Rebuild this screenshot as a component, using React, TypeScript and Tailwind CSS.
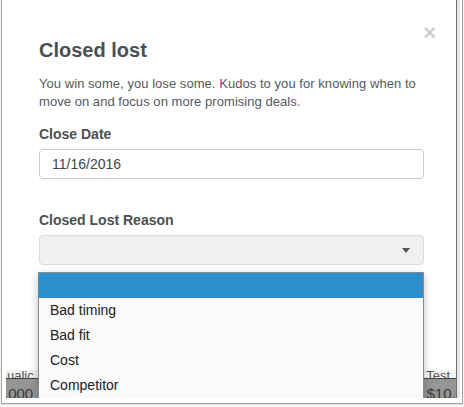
const reasons = ["Bad timing", "Bad fit", "Cost", "Competitor", "Other"];

export default function App() {
  return (
    <div
      className="w-[464px] h-[407px] bg-white pl-[1px] overflow-hidden"
      style={{ fontFamily: '"Liberation Sans", Arial, sans-serif' }}
    >
      <div className="w-[462px] h-[404px] border-l border-r border-b border-[#a3a3a3] pl-[4px] pr-[2px] pb-[5px] flex shadow-[0_1px_2px_rgba(0,0,0,0.15)]">
        {/* screenshot area */}
        <div className="relative flex-1 flex overflow-hidden">
          <div className="flex-1 flex flex-col">
            {/* modal */}
            <div className="relative h-[370px] bg-white pl-[33px] pr-[32px] pt-[38px]">
              <button className="absolute right-[20px] top-[22px] text-[22px] font-bold leading-none text-[#cfcfcf]">
                ×
              </button>
              <h2 className="text-[20px] font-semibold leading-[24px] text-[#4a4f54]">
                Closed lost
              </h2>
              <p className="mt-[13px] text-[13px] tracking-[0.05px] leading-[18px] text-[#55595e]">
                You win some, you lose some. Kudos to you for knowing when to move on and focus on more promising deals.
              </p>
              <p className="mt-[14px] text-[14px] font-bold leading-[18px] text-[#4a4f54]">Close Date</p>
              <div className="mt-[6px] h-[30px] rounded-[4px] border border-[#c9c9c9] bg-white pl-[12px] flex items-center text-[14px] text-[#444]">
                11/16/2016
              </div>
              <p className="mt-[32px] text-[14px] font-bold leading-[18px] text-[#4a4f54]">Closed Lost Reason</p>
              <div className="mt-[6px] h-[30px] rounded-[4px] border border-[#dcdcdc] bg-[#f0f0f0] flex items-center justify-end pr-[13px]">
                <span className="w-0 h-0 border-l-[4px] border-r-[4px] border-t-[5px] border-l-transparent border-r-transparent border-t-[#555]" />
              </div>
            </div>
            {/* page behind modal */}
            <div className="flex-1 flex flex-col bg-[#f3f3f3]">
              <div className="h-[9px] flex justify-between items-end border-b border-[#444] text-[13px] leading-[14px] text-[#555] overflow-hidden">
                <span className="-mb-[5px] pl-[1px]">ualic</span>
                <span className="-mb-[5px] pr-[6px]">Test</span>
              </div>
              <div className="flex-1 bg-[#959595] flex justify-between items-end text-[15px] text-[#3a3a3a] leading-none overflow-hidden">
                <span className="-ml-[2px] mb-[-3px]">.000</span>
                <span className="mb-[-3px] -mr-[8px]">$10.0</span>
              </div>
            </div>
          </div>
          <div className="w-[4px] border-l border-[#6e6e6e] bg-[#e6e6e6]" />

          {/* open dropdown */}
          <div className="absolute left-[32px] top-[272px] w-[386px] h-[140px] border border-[#8a8a8a] bg-[#fafafa] shadow-[0_3px_8px_rgba(0,0,0,0.25)]">
            <div className="h-[25px] bg-[#2b8fcb]" />
            {reasons.map((r) => (
              <div key={r} className="h-[25px] pl-[11px] flex items-center text-[14px] text-[#222]">
                {r}
              </div>
            ))}
          </div>
        </div>
      </div>
    </div>
  );
}
